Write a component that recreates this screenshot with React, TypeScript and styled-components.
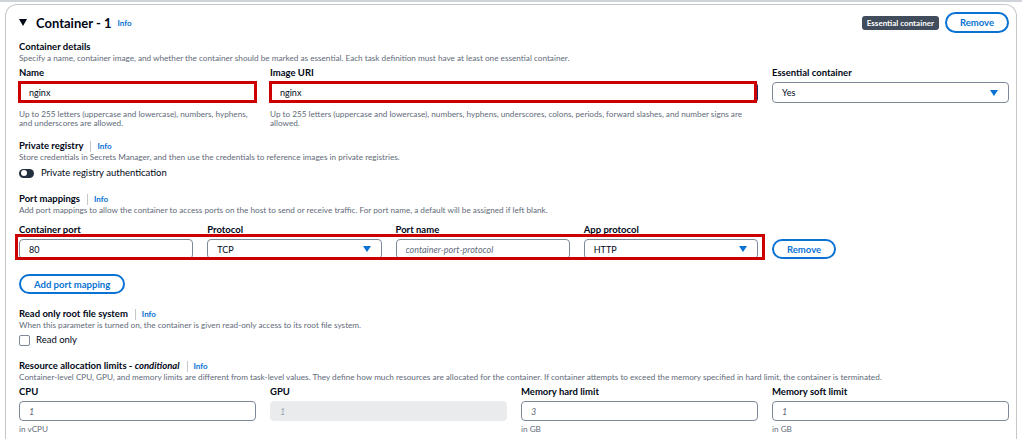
import styled, { createGlobalStyle } from 'styled-components';

const GlobalStyle = createGlobalStyle`
  body {
    margin: 0;
    background: #fff;
    font-family: Lato, "Open Sans", Arial, sans-serif;
    color: #000716;
  }
  * { box-sizing: border-box; }
`;

const Page = styled.div`
  border-top: 2px solid #cfd2d6;
  padding: 2px 5px 0;
  height: 439px;
  overflow: hidden;
`;

const Card = styled.div`
  border: 1px solid #c6c6cd;
  border-bottom: none;
  border-radius: 12px 12px 0 0;
  padding: 7px 7px 20px 13px;
`;

const Header = styled.div`
  display: flex;
  align-items: center;
  justify-content: space-between;
  height: 21px;
`;

const HeaderLeft = styled.div`
  display: flex;
  align-items: baseline;
  gap: 6px;
`;

const Heading = styled.h2`
  margin: 0;
  font-size: 13px;
  font-weight: 700;
  display: flex;
  align-items: center;
  gap: 9px;
  line-height: 16px;
`;

const HeaderRight = styled.div`
  display: flex;
  align-items: center;
  gap: 6px;
`;

const Badge = styled.span`
  background: #414d5c;
  color: #fff;
  font-size: 8px;
  font-weight: 700;
  border-radius: 3px;
  padding: 0 5px;
  height: 14px;
  line-height: 14px;
`;

const PillButton = styled.button<{ $h?: number }>`
  font-family: inherit;
  background: #fff;
  border: 2px solid #0972d3;
  color: #0972d3;
  font-weight: 700;
  font-size: 9.5px;
  border-radius: 14px;
  padding: 0 13px;
  height: ${({ $h }) => $h ?? 20}px;
  cursor: pointer;
`;

const Section = styled.div<{ $mt: number }>`
  margin-top: ${({ $mt }) => $mt}px;
`;

const ButtonRow = styled.div<{ $mt: number }>`
  display: flex;
  margin-top: ${({ $mt }) => $mt}px;
`;

const Title = styled.div`
  display: flex;
  align-items: center;
  font-size: 9.5px;
  font-weight: 700;
  line-height: 12px;
`;

const Sep = styled.span`
  width: 1px;
  height: 11px;
  background: #c6c6cd;
  margin: 0 6px 0 7px;
`;

const Info = styled.span<{ $size?: number }>`
  color: #0972d3;
  font-weight: 700;
  font-size: ${({ $size }) => $size ?? 8}px;
`;

const Desc = styled.div`
  font-size: 8.2px;
  line-height: 11px;
  color: #5f6b7a;
`;

const Grid = styled.div<{ $mt: number }>`
  display: grid;
  grid-template-columns: repeat(4, 1fr);
  column-gap: 14px;
  margin-top: ${({ $mt }) => $mt}px;
`;

const Field = styled.div<{ $span?: number }>`
  grid-column: span ${({ $span }) => $span ?? 1};
  display: flex;
  flex-direction: column;
  position: relative;
`;

const Label = styled.label`
  font-size: 9.5px;
  font-weight: 700;
  line-height: 12px;
  margin-bottom: 3px;
`;

const Input = styled.input<{ $h?: number; $focus?: boolean }>`
  width: 100%;
  height: ${({ $h }) => $h ?? 21}px;
  border: 1px solid ${({ $focus }) => ($focus ? '#1a2a5e' : '#7d8998')};
  border-radius: 4px;
  padding: 0 9px;
  font-family: inherit;
  font-size: 9px;
  color: #000716;
  background: #fff;
  outline: none;

  &::placeholder {
    color: #5f6b7a;
    font-style: italic;
  }

  &:disabled {
    background: #e9ebed;
    border-color: #e9ebed;
  }
  &:disabled::placeholder {
    color: #9ba7b6;
  }
`;

const Select = styled.div<{ $h?: number }>`
  height: ${({ $h }) => $h ?? 21}px;
  border: 1px solid #7d8998;
  border-radius: 4px;
  padding: 0 10px 0 9px;
  display: flex;
  align-items: center;
  justify-content: space-between;
  font-size: 9px;
`;

const Help = styled.div<{ $mt?: number }>`
  font-size: 8.2px;
  line-height: 9px;
  color: #5f6b7a;
  margin-top: ${({ $mt }) => $mt ?? 7}px;
`;

const Mark = styled.div<{ $t: number; $l: number; $r: number; $b: number }>`
  position: absolute;
  top: ${({ $t }) => $t}px;
  left: ${({ $l }) => $l}px;
  right: ${({ $r }) => $r}px;
  bottom: ${({ $b }) => $b}px;
  border: 3px solid #cc0000;
  pointer-events: none;
`;

const InlineRow = styled.div<{ $mt: number }>`
  display: flex;
  align-items: center;
  gap: 7px;
  font-size: 9.5px;
  line-height: 12px;
  margin-top: ${({ $mt }) => $mt}px;
`;

const Toggle = styled.span`
  width: 15px;
  height: 9px;
  border-radius: 5px;
  background: #232f3e;
  position: relative;
  &::after {
    content: '';
    position: absolute;
    left: 2px;
    top: 1.5px;
    width: 6px;
    height: 6px;
    border-radius: 50%;
    background: #fff;
  }
`;

const Checkbox = styled.span`
  width: 11px;
  height: 11px;
  border: 1px solid #7d8998;
  border-radius: 2px;
  margin-right: -1px;
`;

const PortGroup = styled.div`
  grid-column: span 3;
  display: grid;
  grid-template-columns: repeat(4, 1fr);
  column-gap: 14px;
  position: relative;
`;

const ButtonCell = styled.div`
  display: flex;
  align-items: flex-end;
`;

const Caret = () => (
  <svg width="8" height="6" viewBox="0 0 8 6">
    <path d="M0 0h8L4 6z" fill="#0972d3" />
  </svg>
);

const Expand = () => (
  <svg width="8" height="7" viewBox="0 0 8 7">
    <path d="M0 0h8L4 7z" fill="#000716" />
  </svg>
);

export default function App() {
  return (
    <>
      <GlobalStyle />
      <Page>
        <Card>
          <Header>
            <HeaderLeft>
              <Heading>
                <Expand />
                Container - 1
              </Heading>
              <Info>Info</Info>
            </HeaderLeft>
            <HeaderRight>
              <Badge>Essential container</Badge>
              <PillButton $h={21}>Remove</PillButton>
            </HeaderRight>
          </Header>

          <Section $mt={8}>
            <Title>Container details</Title>
            <Desc>
              Specify a name, container image, and whether the container should be marked as essential. Each task
              definition must have at least one essential container.
            </Desc>
            <Grid $mt={3}>
              <Field>
                <Label>Name</Label>
                <Input readOnly value="nginx" />
                <Mark $t={14} $l={-1} $r={-1} $b={25} />
                <Help>
                  Up to 255 letters (uppercase and lowercase), numbers, hyphens,
                  <br />
                  and underscores are allowed.
                </Help>
              </Field>
              <Field $span={2}>
                <Label>Image URI</Label>
                <Input readOnly value="nginx" $focus />
                <Mark $t={14} $l={-1} $r={1} $b={25} />
                <Help>
                  Up to 255 letters (uppercase and lowercase), numbers, hyphens, underscores, colons, periods, forward
                  slashes, and number signs are
                  <br />
                  allowed.
                </Help>
              </Field>
              <Field>
                <Label>Essential container</Label>
                <Select>
                  Yes
                  <Caret />
                </Select>
              </Field>
            </Grid>
          </Section>

          <Section $mt={12}>
            <Title>
              Private registry
              <Sep />
              <Info>Info</Info>
            </Title>
            <Desc>
              Store credentials in Secrets Manager, and then use the credentials to reference images in private
              registries.
            </Desc>
            <InlineRow $mt={4}>
              <Toggle />
              Private registry authentication
            </InlineRow>
          </Section>

          <Section $mt={14}>
            <Title>
              Port mappings
              <Sep />
              <Info>Info</Info>
            </Title>
            <Desc>
              Add port mappings to allow the container to access ports on the host to send or receive traffic. For port
              name, a default will be assigned if left blank.
            </Desc>
            <Grid $mt={8}>
              <PortGroup>
                <Field>
                  <Label>Container port</Label>
                  <Input readOnly value="80" $h={20} />
                </Field>
                <Field>
                  <Label>Protocol</Label>
                  <Select $h={20}>
                    TCP
                    <Caret />
                  </Select>
                </Field>
                <Field>
                  <Label>Port name</Label>
                  <Input readOnly placeholder="container-port-protocol" $h={20} />
                </Field>
                <Field>
                  <Label>App protocol</Label>
                  <Select $h={20}>
                    HTTP
                    <Caret />
                  </Select>
                </Field>
                <Mark $t={10} $l={-4} $r={-7} $b={-1} />
              </PortGroup>
              <ButtonCell>
                <PillButton>Remove</PillButton>
              </ButtonCell>
            </Grid>
            <ButtonRow $mt={15}>
              <PillButton>Add port mapping</PillButton>
            </ButtonRow>
          </Section>

          <Section $mt={14}>
            <Title>
              Read only root file system
              <Sep />
              <Info>Info</Info>
            </Title>
            <Desc>When this parameter is turned on, the container is given read-only access to its root file system.</Desc>
            <InlineRow $mt={3}>
              <Checkbox />
              Read only
            </InlineRow>
          </Section>

          <Section $mt={14}>
            <Title>
              Resource allocation limits -&nbsp;<i>conditional</i>
              <Sep />
              <Info>Info</Info>
            </Title>
            <Desc>
              Container-level CPU, GPU, and memory limits are different from task-level values. They define how much
              resources are allocated for the container. If container attempts to exceed the memory specified in hard
              limit, the container is terminated.
            </Desc>
            <Grid $mt={3}>
              <Field>
                <Label>CPU</Label>
                <Input readOnly placeholder="1" $h={20} />
                <Help $mt={4}>in vCPU</Help>
              </Field>
              <Field>
                <Label>GPU</Label>
                <Input disabled placeholder="1" $h={20} />
              </Field>
              <Field>
                <Label>Memory hard limit</Label>
                <Input readOnly placeholder="3" $h={20} />
                <Help $mt={4}>in GB</Help>
              </Field>
              <Field>
                <Label>Memory soft limit</Label>
                <Input readOnly placeholder="1" $h={20} />
                <Help $mt={4}>in GB</Help>
              </Field>
            </Grid>
          </Section>
        </Card>
      </Page>
    </>
  );
}
